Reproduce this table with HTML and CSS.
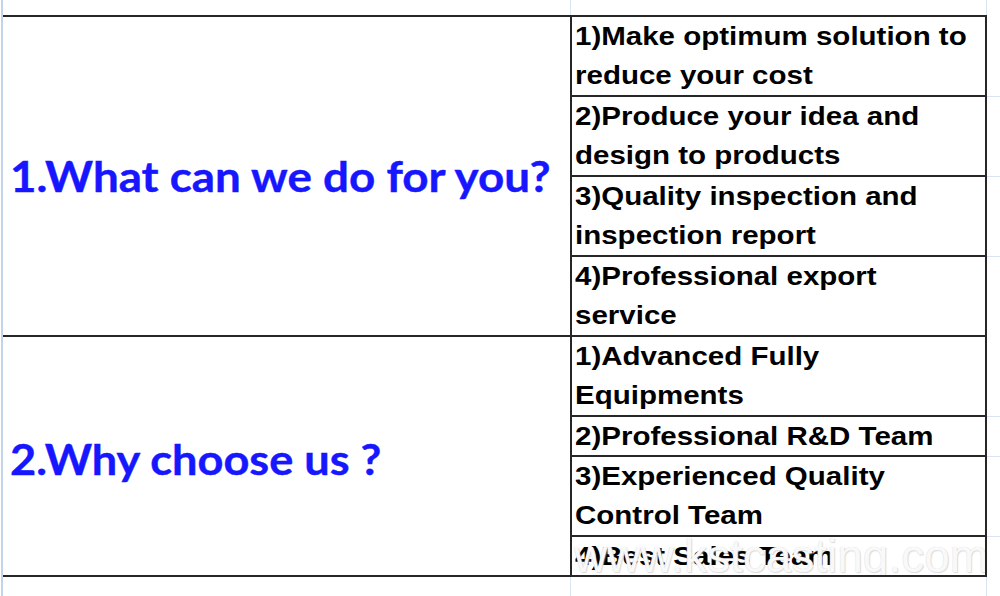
FILE: index.html
```html
<!DOCTYPE html>
<html lang="en">
<head>
<meta charset="utf-8">
<title>Services</title>
<link rel="stylesheet" href="styles.css">
</head>
<body>
<div class="sheet">
  <div class="table">
    <section class="group">
      <div class="topic"><span class="topic-text">1.What can we do for you?</span></div>
      <ul class="items">
        <li class="item l2"><span class="txt">1)Make optimum solution to<br>reduce your cost</span></li>
        <li class="item l2"><span class="txt">2)Produce your idea and<br>design to products</span></li>
        <li class="item l2"><span class="txt">3)Quality inspection and<br>inspection report</span></li>
        <li class="item l2"><span class="txt">4)Professional export<br>service</span></li>
      </ul>
    </section>
    <section class="group">
      <div class="topic topic-2"><span class="topic-text topic-text-2">2.Why choose us ?</span></div>
      <ul class="items">
        <li class="item l2"><span class="txt">1)Advanced Fully<br>Equipments</span></li>
        <li class="item l1"><span class="txt">2)Professional R&amp;D Team</span></li>
        <li class="item l2"><span class="txt">3)Experienced Quality<br>Control Team</span></li>
        <li class="item l1 last-item"><span class="txt">4)Best Sales Team</span>
          <span class="watermark">www.kstcasting.com</span></li>
      </ul>
    </section>
  </div>
</div>
</body>
</html>
```
FILE: styles.css
```css
html, body {
  margin: 0;
  padding: 0;
  background: #ffffff;
}

.sheet {
  width: 997px;
  height: 596px;
  margin-left: 1px;
  border-left: 2px solid #c3d3e9;
  overflow: hidden;
  background:
    linear-gradient(to right, transparent 567px, #dbe4f2 567px, #dbe4f2 568px, transparent 568px,
      transparent 983px, #dbe4f2 983px, #dbe4f2 984px, transparent 984px) 0 0 / 100% 15px no-repeat,
    linear-gradient(to right, transparent 567px, #dbe4f2 567px, #dbe4f2 568px, transparent 568px,
      transparent 983px, #dbe4f2 983px, #dbe4f2 984px, transparent 984px) 0 577px / 100% 19px no-repeat,
    #ffffff;
}

.table {
  margin-top: 15px;
  width: 984px;
  border-top: 2px solid #262626;
}

.group {
  display: grid;
  grid-template-columns: 567px 417px;
  border-bottom: 2px solid #262626;
}

.topic {
  display: flex;
  align-items: center;
  padding-left: 7px;
}

.topic-2 {
  padding-top: 5px;
}

.topic-text {
  font-family: "Lato", "Open Sans", sans-serif;
  font-weight: 700;
  font-size: 42px;
  color: #1616ff;
  white-space: nowrap;
  display: inline-block;
  transform: scaleX(1.09);
  transform-origin: left center;
  -webkit-text-stroke: 0.4px #1616ff;
}

.topic-text-2 {
  transform: scaleX(1.075);
}

.items {
  list-style: none;
  margin: 0;
  padding: 0;
  border-left: 2px solid #262626;
  border-right: 2px solid #262626;
}

.item {
  position: relative;
  border-bottom: 2px solid #262626;
  padding-left: 3px;
  font-family: "Liberation Sans", Arial, sans-serif;
  font-weight: 700;
  font-size: 25px;
  line-height: 39px;
  color: #000000;
}

.item::after {
  content: "";
  position: absolute;
  left: calc(100% + 2px);
  bottom: -2px;
  width: 20px;
  height: 1px;
  background: #dbe4f2;
}

.item:last-child {
  border-bottom: none;
}

.item:last-child::after {
  display: none;
}

.l2 {
  height: 78px;
}

.l1 {
  height: 38px;
}

.txt {
  display: block;
  white-space: nowrap;
  transform: scaleX(1.18);
  transform-origin: left center;
}

.last-item {
  overflow: hidden;
}

.watermark {
  position: absolute;
  left: 2px;
  top: -7px;
  font-family: "Liberation Sans", Arial, sans-serif;
  font-weight: 400;
  font-size: 46px;
  line-height: 52px;
  color: rgba(255, 255, 255, 0.88);
  text-shadow: 0 0 1px #cfcfcf, 1px 1px 1px rgba(190, 190, 190, 0.5);
  white-space: nowrap;
  pointer-events: none;
}
```
